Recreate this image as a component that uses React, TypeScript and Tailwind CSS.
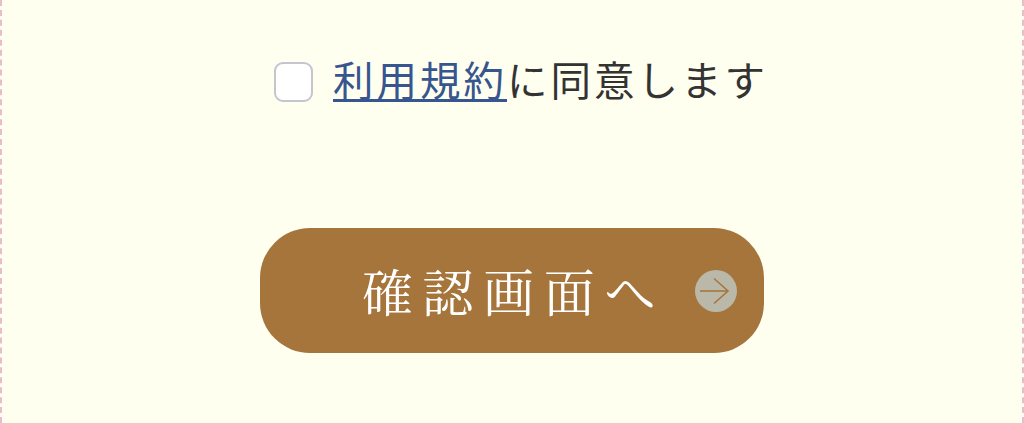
export default function App() {
  return (
    <div className="box-border h-[423px] w-[1024px] overflow-hidden border-x-2 border-dashed border-x-[#e9bccb] bg-[#fffff0] flex flex-col items-center pt-[54px]">
      <label
        className="ml-[18px] flex h-[56px] items-center text-[#333333] text-[40.5px] leading-[56px] tracking-[3px]"
        style={{ fontFamily: '"Noto Sans CJK JP", sans-serif' }}
      >
        <span className="mr-[20px] h-[40px] w-[39px] rounded-[9px] border-2 border-[#c4c5cf] bg-white" />
        <span className="-mt-[6px]">
          <a className="text-[#37558f] underline decoration-[3px] underline-offset-[3px]">利用規約</a>に同意します
        </span>
      </label>
      <div className="mt-[118px] relative flex h-[125px] w-[504px] items-center justify-center rounded-[50px] bg-[#a6753c]">
        <span
          className="ml-[3px] text-[51px] leading-none tracking-[9.6px] text-white"
          style={{ fontFamily: '"Noto Serif CJK JP", "Noto Serif", "Liberation Serif", serif' }}
        >
          確認画面へ
        </span>
        <span className="absolute right-[27px] top-[42px] flex h-[42px] w-[42px] items-center justify-center rounded-full bg-[#b9b8a9]">
          <svg width="34" height="28" viewBox="0 0 34 28" fill="none" stroke="#a6753c" strokeWidth="1.6">
            <path d="M1 14H29" />
            <path d="M15 1.5L29 14L15 26.5" />
          </svg>
        </span>
      </div>
    </div>
  );
}
